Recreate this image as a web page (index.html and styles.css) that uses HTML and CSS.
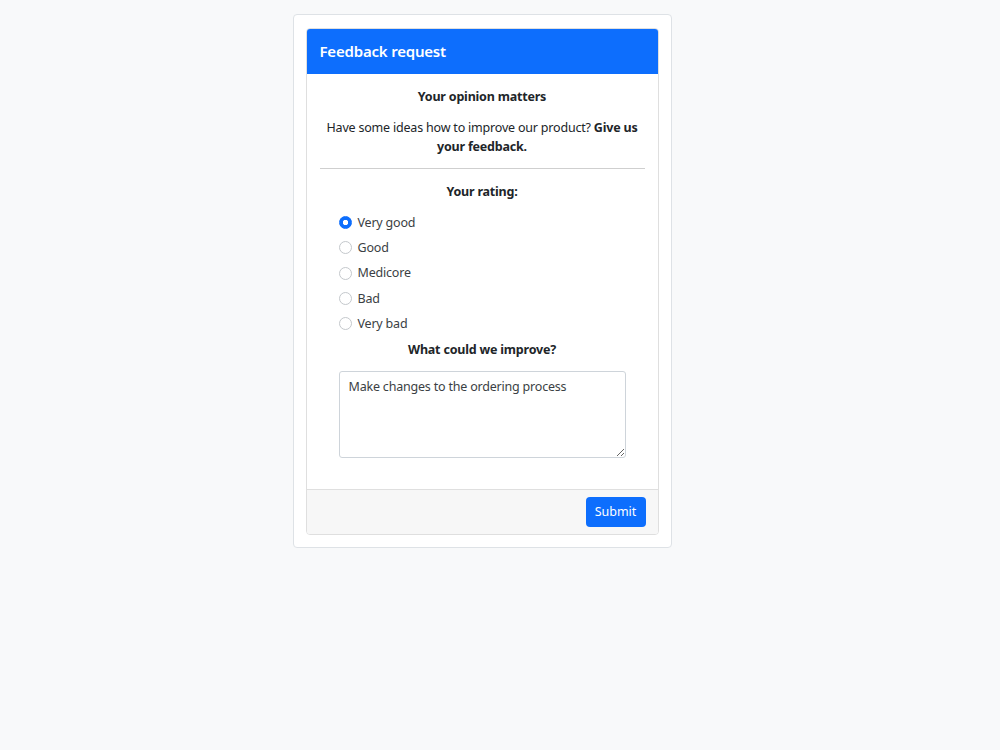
FILE: index.html
```html
<!DOCTYPE html>
<html>
<head>
    <meta charset="utf-8" />
    <title>Feedback request</title>
    <link rel="stylesheet" href="styles.css">
</head>
<body>
    <div class="wrapper">
        <div class="card">
            <div class="card-header">Feedback request</div>
            <div class="card-body">
                <p class="lead">Your opinion matters</p>
                <p class="intro">Have some ideas how to improve our product? <strong>Give us your feedback.</strong></p>
                <hr>
                <p class="lead rating-title">Your rating:</p>
                <div class="form-inner">
                    <label class="check"><input type="radio" name="rating" checked> Very good</label>
                    <label class="check"><input type="radio" name="rating"> Good</label>
                    <label class="check"><input type="radio" name="rating"> Medicore</label>
                    <label class="check"><input type="radio" name="rating"> Bad</label>
                    <label class="check"><input type="radio" name="rating"> Very bad</label>
                </div>
                <p class="lead improve-title">What could we improve?</p>
                <div class="form-inner">
                    <textarea rows="4">Make changes to the ordering process</textarea>
                </div>
            </div>
            <div class="card-footer">
                <button class="btn">Submit</button>
            </div>
        </div>
    </div>
</body>
</html>
```

FILE: styles.css
```css
body {
    margin: 0;
    padding: 14px 36px 0 0;
    background: #f8f9fa;
    font-family: "Noto Sans", "Open Sans", sans-serif;
    font-size: 12.5px;
    letter-spacing: -0.2px;
    line-height: 19.5px;
    color: #212529;
}
.wrapper {
    width: 353px;
    margin: 0 auto;
    padding: 13px 12px 12px;
    background: white;
    border: 1px solid #dee2e6;
    border-radius: 4px;
}
.card {
    border: 1px solid #dfdfdf;
    border-radius: 4px;
    overflow: hidden;
}
.card-header {
    background: #0d6efd;
    color: white;
    height: 45px;
    line-height: 45px;
    padding: 0 13px;
    font-size: 15px;
    font-weight: 600;
}
.card-body {
    padding: 13px 13px 31px;
}
p {
    margin: 0 0 11px;
}
.lead {
    text-align: center;
    font-weight: 700;
}
.intro {
    text-align: center;
}
hr {
    border: 0;
    border-top: 1px solid #cfcfcf;
    margin: 11px 0 13px;
}
.rating-title {
    margin-bottom: 9px;
}
.improve-title {
    margin-top: 4px;
}
.form-inner {
    margin: 0 19px;
}
.check {
    display: flex;
    align-items: center;
    gap: 6px;
    height: 25.25px;
    color: #3b3f44;
}
/* custom radio circle */
.check input {
    appearance: none;
    margin: 0;
    width: 13px;
    height: 13px;
    border: 1px solid #c4c8cc;
    border-radius: 50%;
    background: white;
}
.check input:checked {
    border-color: #0d6efd;
    background: radial-gradient(circle, white 2.4px, #0d6efd 3px);
}
textarea {
    display: block;
    box-sizing: border-box;
    width: 100%;
    height: 87px;
    padding: 5px 9px;
    border: 1px solid #ced4da;
    border-radius: 3px;
    font-family: inherit;
    font-size: 12.5px;
    letter-spacing: -0.2px;
    line-height: 19.5px;
    color: #3b3f44;
}
.card-footer {
    background: #f7f7f7;
    border-top: 1px solid #dfdfdf;
    height: 44px;
    padding: 0 12px;
    display: flex;
    align-items: center;
    justify-content: flex-end;
}
.btn {
    background: #0d6efd;
    color: white;
    border: 0;
    border-radius: 4px;
    width: 60px;
    height: 30px;
    font-family: inherit;
    font-size: 12.5px;
}
```
